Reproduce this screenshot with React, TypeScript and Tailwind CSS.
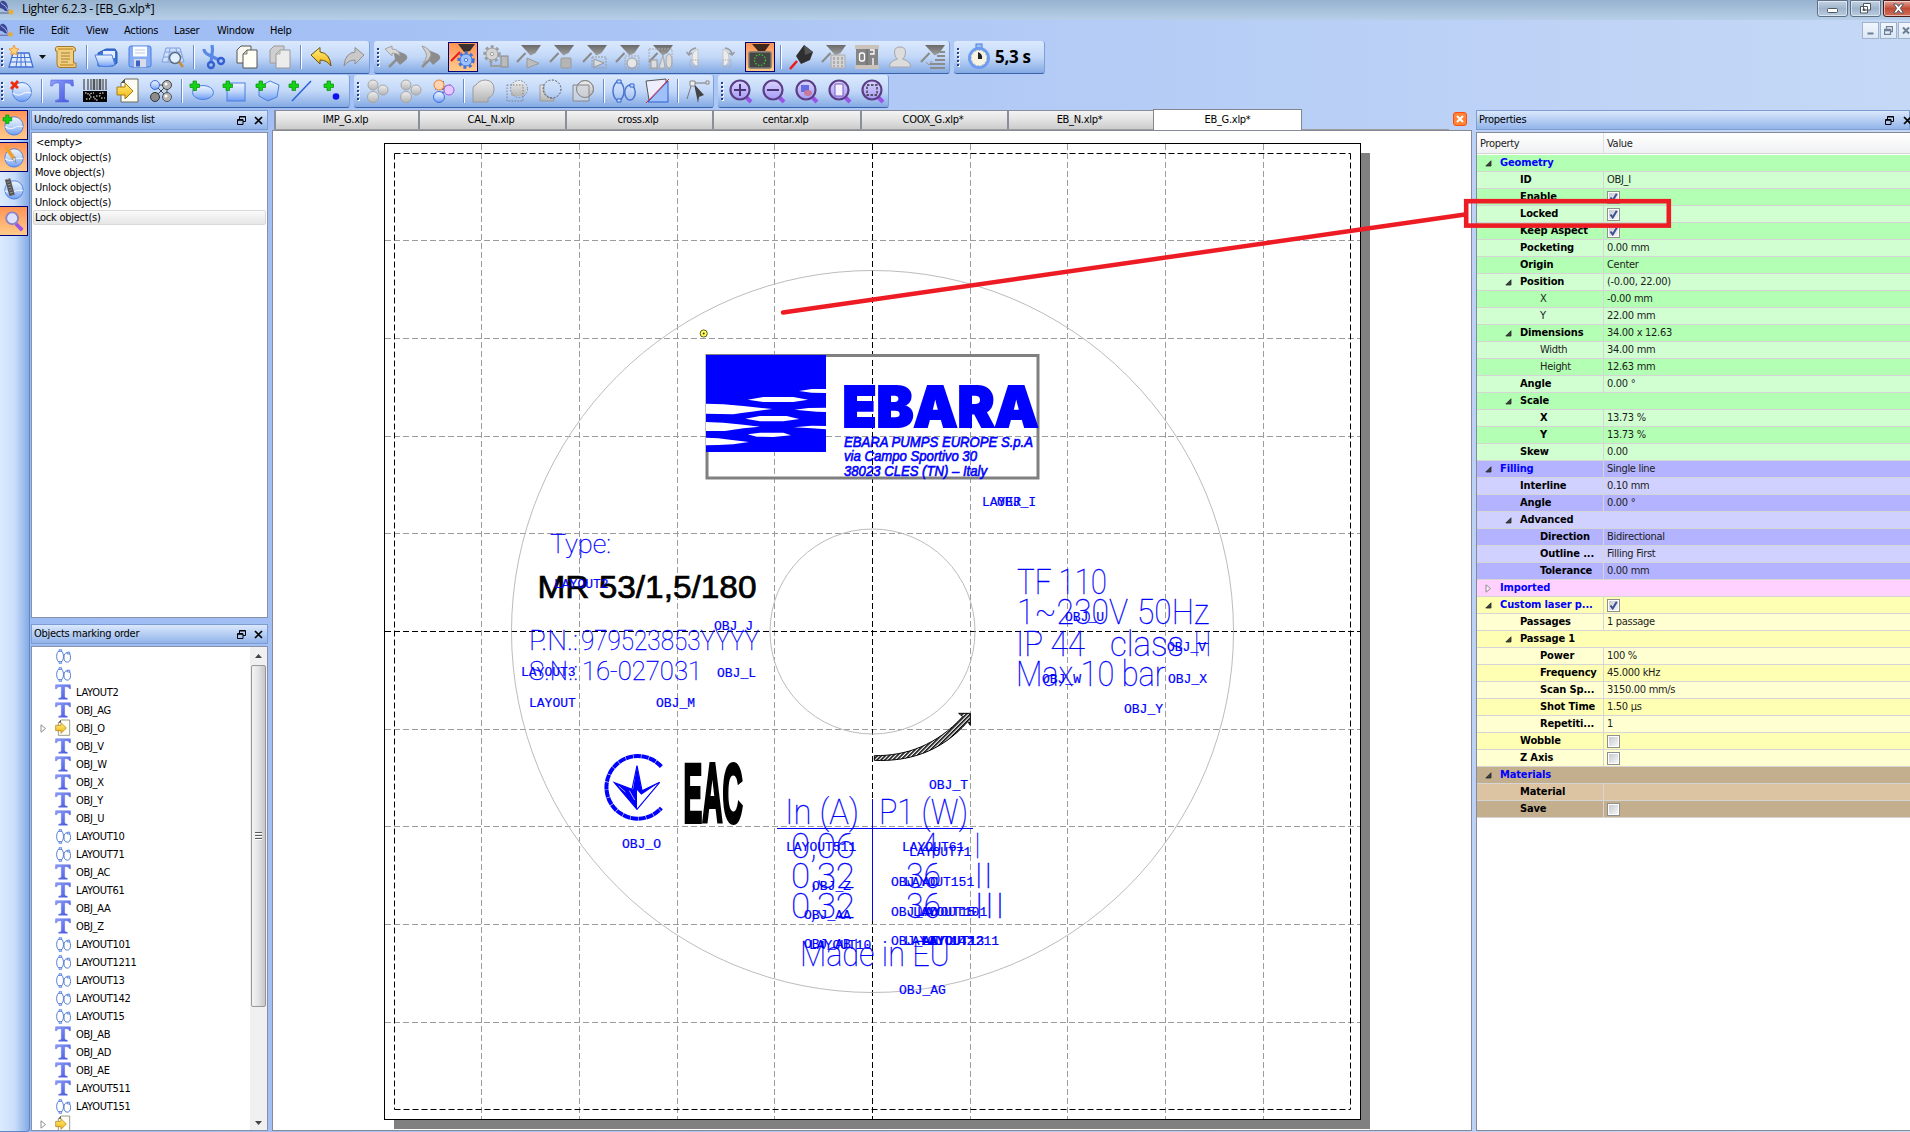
import React from "react";

const UI = "font-['DejaVu_Sans_Condensed','DejaVu_Sans',sans-serif]";

type IconProps = { children: React.ReactNode; size?: number };
const Svg = ({ children, size = 24 }: IconProps) => (
  <svg width={size} height={size} viewBox="0 0 24 24" fill="none" className="shrink-0 overflow-visible">
    {children}
  </svg>
);

const Defs = () => (
  <svg width="0" height="0" className="absolute">
    <defs>
      <linearGradient id="blueBall" x1="0" y1="0" x2="0" y2="1">
        <stop offset="0" stopColor="#eef5ff" />
        <stop offset=".5" stopColor="#bcd4fb" />
        <stop offset="1" stopColor="#6f9cf2" />
      </linearGradient>
      <linearGradient id="grayBall" x1="0" y1="0" x2="0" y2="1">
        <stop offset="0" stopColor="#f0f0f0" />
        <stop offset="1" stopColor="#b4b4b4" />
      </linearGradient>
      <linearGradient id="yel" x1="0" y1="0" x2="0" y2="1">
        <stop offset="0" stopColor="#fff07a" />
        <stop offset="1" stopColor="#f2b211" />
      </linearGradient>
      <linearGradient id="tee" x1="0" y1="0" x2="1" y2="1">
        <stop offset="0" stopColor="#8fa0ff" />
        <stop offset="1" stopColor="#3f50d8" />
      </linearGradient>
      <linearGradient id="lens" x1="0" y1="0" x2="0" y2="1">
        <stop offset="0" stopColor="#d9d4ff" />
        <stop offset="1" stopColor="#a79af5" />
      </linearGradient>
      <linearGradient id="headG" x1="0" y1="0" x2="0" y2="1">
        <stop offset="0" stopColor="#6a6a6a" />
        <stop offset="1" stopColor="#a0a0a0" />
      </linearGradient>
    </defs>
  </svg>
);

const Plus = ({ x = 1, y = 1 }) => (
  <path d={`M${x + 3} ${y}h3.500v3h3v3.500h-3v3h-3.500v-3h-3v-3.500h3z`} fill="#12d412" stroke="#0a8a0a" strokeWidth=".7" />
);
const Ball = ({ cx = 13, cy = 13, r = 9.5 }) => (
  <g>
    <circle cx={cx} cy={cy} r={r} fill="url(#blueBall)" stroke="#4a7fe0" />
    <path d={`M${cx - r} ${cy + 1}q${r * 0.6} 3.5 ${r} 1t${r} -1`} stroke="#fff" strokeWidth="1.2" opacity=".8" />
  </g>
);
const Head = () => (
  <>
    <path d="M4 0H24L18.5 8 13.5 10.5z" fill="url(#headG)" />
    <path d="M0 17L8.5 8" stroke="#8a8a8a" strokeWidth="2" />
  </>
);
const Feather = ({ size = 16 }) => (
  <svg width={size} height={size} viewBox="0 0 16 16" className="shrink-0">
    <path d="M0 3Q1 0 4 1q4 2 4 8l1 2Q5 12 3 9L0 8z" fill="#3b4596" />
    <path d="M1 3q5 2 8 9" stroke="#aeb6ea" fill="none" />
    <path d="M0 13h9" stroke="#57618f" />
    <path d="M11 9v6M8 12h6M9 10l4 4M13 10l-4 4" stroke="#f3a712" />
  </svg>
);

const Gear = ({ cx = 14, cy = 15, r = 6, fill = "#9cc0ff", stroke = "#3f73dd" }) => (
  <g>
    <circle cx={cx} cy={cy} r={r + 1.2} stroke={stroke} strokeWidth="3" strokeDasharray="3 2.4" />
    <circle cx={cx} cy={cy} r={r} fill={fill} stroke={stroke} />
    <circle cx={cx} cy={cy} r={1.6} fill="#fff" stroke={stroke} />
  </g>
);

const GridIcon = () => (
  <Svg>
    <path d="M4 8H20L24 22H0z" fill="#dfeaff" stroke="#3f6fd6" strokeWidth="1.3" />
    <path d="M9 8L7 22M15 8l2 14M3 12.500h18M1.500 17h21M12 8v14" stroke="#3f6fd6" />
    <path d="M5 0l1.500 3.500L10 4 7.500 6.500 8 10 5 8.500 2 10l.5-3.500L0 4l3.500-.5z" fill="#ffd27a" stroke="#f08a1d" strokeWidth=".8" />
  </Svg>
);
const Scroll = () => (
  <Svg>
    <path d="M3 1.500H19Q22 2 21.500 6H19.500V18H22V22.500H6Q3 22.500 3 19V6H1.500Q.5 2 3 1.500z" fill="#efcf80" stroke="#a5762a" />
    <path d="M4 3h15v2H4zM6 19h14v2H6z" fill="#d6a549" />
    <path d="M7 8h9M7 11h9M7 14h9M7 17h7" stroke="#a5762a" strokeWidth=".9" />
  </Svg>
);
const Folder = () => (
  <Svg>
    <path d="M3 8l8-4h9l2 3v11l-4 3H3z" fill="#3c72d8" stroke="#2b58b8" />
    <path d="M8 6h12v7H8z" fill="#e8f0ff" />
    <path d="M0 10h17l3 10q-8 3-16 1z" fill="url(#blueBall)" stroke="#4a7fe0" />
  </Svg>
);
const Floppy = () => (
  <Svg>
    <rect x="1" y="1" width="22" height="21" rx="2" fill="#86acf5" stroke="#4a7ce0" />
    <rect x="5" y="1.500" width="14" height="10" fill="#fafcff" />
    <path d="M7 5h10M7 8h10" stroke="#bfcbe6" />
    <rect x="6" y="14" width="12" height="8" fill="#d6dbe6" />
    <rect x="8" y="15.500" width="4" height="6" fill="#3a62c4" />
  </Svg>
);
const Preview = () => (
  <Svg>
    <path d="M5 3H19L23 17H1z" fill="#cfe0ff" stroke="#7fa0dc" />
    <path d="M9 3L7 17M15 3l2 14M4 7h16M3 12h18" stroke="#7fa0dc" />
    <circle cx="14" cy="13" r="5.500" fill="#e3f0ff" stroke="#5d6b88" strokeWidth="1.500" />
    <path d="M18 17l4 5" stroke="#c98b2c" strokeWidth="2.500" />
  </Svg>
);
const Scissors = () => (
  <Svg>
    <path d="M2 4q0 4 5 6l10 5M10 0q1 5 0 9l-1 8" stroke="#5a88e6" strokeWidth="3.200" />
    <circle cx="9" cy="20" r="3" stroke="#3560d0" strokeWidth="2.400" />
    <circle cx="19" cy="16" r="3" stroke="#3560d0" strokeWidth="2.400" />
  </Svg>
);
const Copy = ({ gray = false }) => (
  <Svg>
    <path d="M6 1h10v17H2V5z" fill={gray ? "#cfcfcf" : "#f7f7f0"} stroke={gray ? "#9a9a9a" : "#555"} />
    <path d="M12 5h10v18H8V9z" fill={gray ? "#ececec" : "#fffff6"} stroke={gray ? "#9a9a9a" : "#555"} />
    <path d="M12 5v4H8z" fill="#d7d7c8" stroke={gray ? "#9a9a9a" : "#555"} strokeWidth=".7" />
  </Svg>
);
const Undo = ({ gray = false }) => (
  <Svg>
    <g transform={gray ? "translate(24 0) scale(-1 1)" : undefined}>
      <path d="M2 10L11 2.500v4.500q10 1 11 14-4-6-11-6v4z" fill={gray ? "#c9c9c9" : "url(#yel)"} stroke={gray ? "#8e8e8e" : "#6b5410"} />
    </g>
  </Svg>
);
const Pointer = ({ v = 0 }) => (
  <Svg>
    <path d="M8 4L20 9q4 3 1 6l-6 5-5-6z" fill="#8c8c8c" />
    <path d="M12 14L4 22" stroke="#8f8f8f" strokeWidth="2.500" />
    {v === 0 ? (
      <path d="M0 4l7-3v3q7 0 8 7-3-3-8-3v3z" fill="#d9d9d9" stroke="#a3a3a3" />
    ) : (
      <path d="M4 1q8 2 9 9-2 6-8 8 5-6 3-10z" fill="#cfcfcf" stroke="#a0a0a0" />
    )}
  </Svg>
);
const MarkGear = () => (
  <Svg>
    <path d="M7 -1H24L19 6l-6 1z" fill="#3a3030" />
    <path d="M0 16L9 7" stroke="#f01818" strokeWidth="2" />
    <Gear cx={15} cy={15} r={6} />
  </Svg>
);
const GrayGear = () => (
  <Svg>
    <Gear cx={8} cy={9} r={6} fill="#d4d4d4" stroke="#9d9d9d" />
    <rect x="17" y="11" width="7" height="11" fill="#bbb" stroke="#888" />
    <path d="M7 16v5h9" stroke="#9d9d9d" strokeWidth="2" />
  </Svg>
);
const L = ({ children }: { children: React.ReactNode }) => (
  <Svg>
    <Head />
    {children}
  </Svg>
);
const Rotate = ({ flip = false }) => (
  <Svg>
    <g transform={flip ? "translate(24 0) scale(-1 1)" : undefined}>
      <path d="M16 4v17q-6-1-6-8t6-9z" fill="#ececec" stroke="#c4c4c4" />
      <path d="M14 3Q8 4 7 9M4.500 7L7 10l3-2" stroke="#9a9a9a" strokeWidth="1.500" />
      <path d="M8 15h8v7H8z" stroke="#aaa" strokeDasharray="1.500 1" />
    </g>
  </Svg>
);
const Screen = () => (
  <Svg>
    <path d="M4 -1H22L17 6H10z" fill="#40291c" />
    <rect x="1" y="7" width="22" height="16" rx="1.500" fill="#444" stroke="#777" strokeWidth="1.500" />
    <circle cx="12" cy="15" r="5.500" stroke="#39c339" strokeWidth="1.300" strokeDasharray="1.500 1.500" />
  </Svg>
);
const LaserPen = () => (
  <Svg>
    <path d="M15 0l9 7-3 8-9 4-5-8z" fill="#2f2f2f" />
    <path d="M15 0l9 7-8 3z" fill="#555" />
    <path d="M8 16L1 24" stroke="#f01818" strokeWidth="2.500" />
  </Svg>
);
const Counter = () => (
  <Svg>
    <rect x="0" y="0" width="24" height="4" fill="#c9c3bb" />
    <rect x="0" y="20" width="24" height="4" fill="#c9c3bb" />
    <rect x="1" y="4" width="22" height="16" fill="#858585" />
    <rect x="4.500" y="8" width="5" height="8" rx="2" stroke="#fff" strokeWidth="1.300" />
    <path d="M12 4v16" stroke="#666" />
    <path d="M15 5h4v4h-4M18 13v7" stroke="#fff" strokeWidth="1.300" />
  </Svg>
);
const Person = () => (
  <Svg>
    <path d="M12 2q6 0 5.500 6-.5 5-3 6 8 2 8 8h-21q0-6 8-8-2.500-1-3-6Q6 2 12 2z" fill="#dcdcdc" stroke="#a6a6a6" />
  </Svg>
);
const Clock = () => (
  <Svg>
    <rect x="9" y="-1" width="6" height="4" fill="#9fc0f7" stroke="#4b7ddd" />
    <circle cx="12" cy="13" r="9.500" fill="#f7f3e3" stroke="#6d9cf0" strokeWidth="3" />
    <circle cx="12" cy="13" r="7.500" stroke="#9a9a88" strokeWidth=".8" strokeDasharray="1 2.900" />
    <path d="M11 7v7h4q1-5-4-7z" fill="#222" />
  </Svg>
);
const DeleteBall = () => (
  <Svg>
    <Ball />
    <path d="M2 3l7 6M9 2L2 10" stroke="#f02a0a" strokeWidth="2.800" />
  </Svg>
);
const Tee = ({ size = 24 }) => (
  <Svg size={size}>
    <path d="M1 1h22l.5 6h-2q-.5-3-4-3H14.500v15q0 2 4 2.500V23h-13v-1.500q4-.5 4-2.500V4H6.500q-3.500 0-4 3h-2z" fill="url(#tee)" stroke="#5566dd" strokeWidth=".6" />
  </Svg>
);
const Barcode = () => (
  <Svg>
    <path d="M1 0v11M5 0v11M8 0v11M14 0v11M20 0v11M23 0v11" stroke="#555" strokeWidth="1.300" />
    <path d="M11 0v11M17 0v11" stroke="#555" strokeWidth="2.500" />
    <rect x="0" y="12" width="24" height="11" fill="#050505" />
    <path d="M2 14h3v2h3v-2h3M13 17h4v-3h4M3 20h4v-2h5v3h3M18 19h4" stroke="#fff" strokeWidth="1" strokeDasharray="1.500 1.500" />
  </Svg>
);
const Import = ({ size = 24 }) => (
  <Svg size={size}>
    <path d="M9 0h13v23H5V4z" fill="#fdfdf4" stroke="#6a6a5c" />
    <path d="M9 0v4H5z" fill="#555" />
    <path d="M1 8h8V4l8 8-8 8v-4H1z" fill="url(#yel)" stroke="#a97a12" />
  </Svg>
);
const Nodes = () => (
  <Svg>
    <path d="M6 6L18 18M18 6L6 18M6 6h12v12" stroke="#444" />
    <circle cx="6" cy="6" r="4.500" fill="url(#blueBall)" stroke="#3f6fd6" />
    <circle cx="18" cy="6" r="4.500" fill="#b5b5b5" stroke="#444" />
    <circle cx="6" cy="18" r="4.500" fill="#8c8c8c" stroke="#333" />
    <circle cx="18" cy="18" r="4.500" fill="#b5b5b5" stroke="#555" />
    <circle cx="17" cy="5" r="1.500" fill="#fff" />
    <circle cx="17" cy="17" r="1.500" fill="#fff" />
  </Svg>
);
const Spheres = ({ multi = false }) => (
  <Svg>
    {multi && <path d="M12 6l8 8M4 10l16-4M12 2v18" stroke="#222" strokeDasharray="2 1.500" />}
    <circle cx="8" cy="6" r="5" fill={multi ? "#ffd4b0" : "url(#grayBall)"} stroke={multi ? "#e8843c" : "#a5a5a5"} />
    <circle cx="18" cy="11" r="5" fill={multi ? "#e6c8ff" : "url(#grayBall)"} stroke={multi ? "#9a5ae0" : "#a5a5a5"} />
    <circle cx="8" cy="18" r="5.500" fill={multi ? "url(#blueBall)" : "url(#grayBall)"} stroke={multi ? "#3f6fe6" : "#a5a5a5"} />
  </Svg>
);
const Bool = ({ v }: { v: number }) => (
  <Svg>
    {v === 0 && <path d="M1 9q0-2 3-3 3-5 10-5 8 1 8 9 0 7-6 9v4H1z" fill="url(#grayBall)" stroke="#9a9a9a" />}
    {v === 1 && (
      <>
        <path d="M6 7q2-5 8-5 7 1 7 8 0 6-4 7H6z" fill="url(#grayBall)" />
        <path d="M2 6h16v16H2z" stroke="#808080" strokeDasharray="1.500 1.500" />
        <circle cx="14" cy="10" r="8.500" stroke="#808080" strokeDasharray="1.500 1.500" />
      </>
    )}
    {v === 2 && (
      <>
        <path d="M2 6h4q-2 12 10 14v2H2z" fill="url(#grayBall)" stroke="#9a9a9a" />
        <circle cx="14" cy="10" r="9" stroke="#555" strokeDasharray="2 1.500" />
      </>
    )}
    {v === 3 && (
      <>
        <circle cx="14" cy="10" r="8.500" fill="url(#grayBall)" stroke="#999" />
        <path d="M2 6h16v16H2z" fill="#d3d7de" fillOpacity=".7" stroke="#888" />
        <circle cx="14" cy="10" r="8.500" stroke="#888" />
      </>
    )}
  </Svg>
);
const Rings = ({ size = 24 }) => (
  <Svg size={size}>
    <ellipse cx="6.500" cy="12" rx="5.500" ry="9.500" stroke="#4b74cf" strokeWidth="1.500" />
    <ellipse cx="18" cy="13.500" rx="5.200" ry="7.500" stroke="#4b74cf" strokeWidth="1.500" />
    <path d="M5 1h4v3H5zM5 20h4v3H5zM18 5h4v3h-4z" fill="#cfe0ff" stroke="#2f62d0" />
  </Svg>
);
const Diag = () => (
  <Svg>
    <path d="M1 2l20-2v21H4z" fill="#eef" stroke="#555" />
    <path d="M23 2v21H3z" fill="#9fc0f8" stroke="#2c5fd8" />
    <path d="M24 0L1 24" stroke="#e02222" />
  </Svg>
);
const NodeEdit = () => (
  <Svg>
    <path d="M6 4h15M6 4L1 20" stroke="#777" />
    <path d="M8 5l10 11-5 2-1 6z" fill="#444" />
    <path d="M4 2h5v5H4zM20 2h3v3h-3z" fill="#eee" stroke="#888" />
  </Svg>
);
const Zoom = ({ children, size = 24 }: { children?: React.ReactNode; size?: number }) => (
  <Svg size={size}>
    <path d="M16 17l6 6" stroke="#9a55e8" strokeWidth="4" />
    <circle cx="11" cy="11" r="9.500" fill="url(#lens)" stroke="#5b3f86" strokeWidth="2.200" />
    {children}
  </Svg>
);

const Sep = () => <div className="ml-[3px] mr-[3px] h-6 w-[2px] shrink-0 border-l border-r border-l-[#6a8ccb] border-r-white" />;
const Slot = ({ children, on }: { children: React.ReactNode; on?: boolean }) => (
  <div className="-ml-px mr-px flex h-[30px] w-[33px] shrink-0 items-center justify-center">
    {on ? (
      <div className="flex h-[30px] w-[30px] items-center justify-center border border-[#00007c] bg-gradient-to-b from-[#fe9355] to-[#ffcb8a]">
        {children}
      </div>
    ) : (
      children
    )}
  </div>
);
const Grip = () => (
  <div className="flex w-[7px] shrink-0 flex-col items-center gap-[2px] pl-[1px]">
    {[0, 1, 2, 3, 4].map((i) => (
      <div key={i} className="h-[2px] w-[2px] bg-[#27418a] shadow-[1px_1px_0_#fff]" />
    ))}
  </div>
);
const Bar = ({ children, w, first }: { children: React.ReactNode; w: string; first?: boolean }) => (
  <div
    className={`flex h-[33px] shrink-0 items-center rounded-[3px] border-b border-r border-b-[#3b61a8] border-r-[#7d9fd8] bg-gradient-to-b from-[#dbe9fd] via-[#c3d8f8] to-[#84aae4] ${w} ${first ? "rounded-l-none" : ""}`}
  >
    {children}
  </div>
);

const DockTitle = ({ title, cut }: { title: string; cut?: boolean }) => (
  <div className="flex h-5 shrink-0 items-center border border-[#7d9cd0] bg-gradient-to-b from-[#dbe8fc] to-[#92b4ea] pl-[2px] pt-px">
    <span className="flex-1 whitespace-nowrap tracking-[-0.27px]">{title}</span>
    <svg width="9" height="9" viewBox="0 0 9 9" fill="none" stroke="#000" className={cut ? "mr-[9px]" : "mr-2"}>
      <path d="M2.500 3V.5h6v5H6M2.500 1h6M.5 3.500h5.500v5H.5zM.5 4.300h5.500" />
    </svg>
    <svg width="9" height="9" viewBox="0 0 9 9" stroke="#000" strokeWidth="1.700" className={cut ? "-mr-[3px]" : "mr-1"}>
      <path d="M1 1l7 7M8 1L1 8" />
    </svg>
  </div>
);

const objects: [string, string][] = [
  ["r", ""], ["r", ""], ["t", "LAYOUT2"], ["t", "OBJ_AG"], ["i", "OBJ_O"], ["t", "OBJ_V"], ["t", "OBJ_W"], ["t", "OBJ_X"],
  ["t", "OBJ_Y"], ["t", "OBJ_U"], ["r", "LAYOUT10"], ["r", "LAYOUT71"], ["t", "OBJ_AC"], ["t", "LAYOUT61"], ["t", "OBJ_AA"],
  ["t", "OBJ_Z"], ["r", "LAYOUT101"], ["r", "LAYOUT1211"], ["r", "LAYOUT13"], ["r", "LAYOUT142"], ["r", "LAYOUT15"],
  ["t", "OBJ_AB"], ["t", "OBJ_AD"], ["t", "OBJ_AE"], ["t", "LAYOUT511"], ["r", "LAYOUT151"], ["i", ""],
];

const G1 = "bg-[#b3ffb3]", G2 = "bg-[#d1ffd1]", B1 = "bg-[#b3b3ff]", B2 = "bg-[#d1d1ff]";
const P = "bg-[#ffd1ff]", Y1 = "bg-[#ffffb3]", Y2 = "bg-[#ffffd1]", M1 = "bg-[#c3ae8d]", M2 = "bg-[#dcc4a2]";
type Row = { c: string; n: string; v?: string; l: number; a?: "open" | "closed"; k?: "on" | "off"; h?: boolean; t?: boolean; s?: boolean };
const rows: Row[] = [
  { c: G1, n: "Geometry", l: 0, a: "open", h: true, s: true },
  { c: G2, n: "ID", v: "OBJ_I", l: 1 },
  { c: G1, n: "Enable", l: 1, k: "on" },
  { c: G2, n: "Locked", l: 1, k: "on" },
  { c: G1, n: "Keep Aspect", l: 1, k: "on" },
  { c: G2, n: "Pocketing", v: "0.00 mm", l: 1 },
  { c: G1, n: "Origin", v: "Center", l: 1 },
  { c: G2, n: "Position", v: "(-0.00, 22.00)", l: 1, a: "open" },
  { c: G1, n: "X", v: "-0.00 mm", l: 2, t: true },
  { c: G2, n: "Y", v: "22.00 mm", l: 2, t: true },
  { c: G1, n: "Dimensions", v: "34.00 x 12.63", l: 1, a: "open" },
  { c: G2, n: "Width", v: "34.00 mm", l: 2, t: true },
  { c: G1, n: "Height", v: "12.63 mm", l: 2, t: true },
  { c: G2, n: "Angle", v: "0.00 °", l: 1 },
  { c: G1, n: "Scale", l: 1, a: "open", s: true },
  { c: G2, n: "X", v: "13.73 %", l: 2 },
  { c: G1, n: "Y", v: "13.73 %", l: 2 },
  { c: G2, n: "Skew", v: "0.00", l: 1 },
  { c: B1, n: "Filling", v: "Single line", l: 0, a: "open", h: true },
  { c: B2, n: "Interline", v: "0.10 mm", l: 1 },
  { c: B1, n: "Angle", v: "0.00 °", l: 1 },
  { c: B2, n: "Advanced", l: 1, a: "open", s: true },
  { c: B1, n: "Direction", v: "Bidirectional", l: 2 },
  { c: B2, n: "Outline ...", v: "Filling First", l: 2 },
  { c: B1, n: "Tolerance", v: "0.00 mm", l: 2 },
  { c: P, n: "Imported", l: 0, a: "closed", h: true, s: true },
  { c: Y1, n: "Custom laser p...", l: 0, a: "open", h: true, k: "on" },
  { c: Y2, n: "Passages", v: "1 passage", l: 1 },
  { c: Y1, n: "Passage 1", l: 1, a: "open", s: true },
  { c: Y2, n: "Power", v: "100 %", l: 2 },
  { c: Y1, n: "Frequency", v: "45.000 kHz", l: 2 },
  { c: Y2, n: "Scan Sp...", v: "3150.00 mm/s", l: 2 },
  { c: Y1, n: "Shot Time", v: "1.50 µs", l: 2 },
  { c: Y2, n: "Repetiti...", v: "1", l: 2 },
  { c: Y1, n: "Wobble", l: 1, k: "off" },
  { c: Y2, n: "Z Axis", l: 1, k: "off" },
  { c: M1, n: "Materials", l: 0, a: "open", h: true, s: true },
  { c: M2, n: "Material", v: "", l: 1 },
  { c: M1, n: "Save", l: 1, k: "off" },
];

const Check = ({ on }: { on: boolean }) => (
  <div className="h-[13px] w-[13px] border border-[#8e8f8f] bg-white p-[1px]">
    <div className="h-[9px] w-[9px] bg-gradient-to-br from-[#c6cad0] to-[#f6f6f6]">
      {on && (
        <svg width="9" height="9" viewBox="0 0 9 9" fill="none" stroke="#3c4f93" strokeWidth="2">
          <path d="M1.500 4.500L3.700 7.500 7.800 .8" />
        </svg>
      )}
    </div>
  </div>
);
const Tri = ({ open }: { open: boolean }) =>
  open ? (
    <svg width="7" height="7" viewBox="0 0 7 7" className="shrink-0">
      <path d="M6 .8V6H.8z" fill="#404040" stroke="#262626" strokeWidth=".8" />
    </svg>
  ) : (
    <svg width="7" height="9" viewBox="0 0 7 9" className="shrink-0">
      <path d="M1 .8v7.400L5.500 4.500z" fill="#fff" fillOpacity=".6" stroke="#8e8e8e" />
    </svg>
  );

const levelPad = ["w-[23px]", "w-[43px]", "w-[63px]"];
const PropRow = ({ r }: { r: Row }) => (
  <div className={`flex h-[17px] border-b border-[#d5d5d5] ${r.c}`}>
    <div className={`flex w-[127px] shrink-0 items-center overflow-hidden ${r.s ? "" : "border-r border-[#d5d5d5]"}`}>
      <div className={`flex shrink-0 justify-end pr-2 ${levelPad[r.l]}`}>{r.a && <Tri open={r.a === "open"} />}</div>
      <span
        className={`whitespace-nowrap leading-4 ${r.t ? "tracking-[-0.3px] text-[#222]" : "font-bold tracking-[-0.13px]"} ${r.h ? "text-[#0000ff]" : ""}`}
      >
        {r.n}
      </span>
    </div>
    <div className="flex items-center whitespace-nowrap pl-[3px] leading-4 tracking-[-0.3px] text-[#1c1c1c]">
      {r.k ? <Check on={r.k === "on"} /> : r.v}
    </div>
  </div>
);

const MONO = "'Liberation Mono', monospace";
const labels: [string, number, number][] = [
  ["LAYER", 982, 506], ["OBJ_I", 997, 506], ["LAYOUT2", 554, 588], ["OBJ_J", 714, 630], ["LAYOUT3", 521, 676],
  ["OBJ_L", 717, 677], ["LAYOUT", 529, 707], ["OBJ_M", 656, 707], ["OBJ_O", 622, 848], ["OBJ_U", 1065, 621],
  ["OBJ_V", 1167, 651], ["OBJ_W", 1042, 683], ["OBJ_X", 1168, 683], ["OBJ_Y", 1124, 713], ["OBJ_T", 929, 789],
  ["LAYOUT511", 786, 851], ["LAYOUT61", 902, 851], ["LAYOUT71", 909, 856], ["OBJ_Z", 812, 890], ["OBJ_AC", 891, 886],
  ["LAYOUT151", 904, 886], ["OBJ_AA", 804, 919], ["OBJ_AD", 891, 916], ["LAYOUT15", 913, 916], ["LAYOUT101", 917, 916],
  ["OBJ_AB", 804, 948], ["LAYOUT10", 809, 949], ["OBJ_AE", 891, 945], ["LAYOUT142", 904, 945], ["LAYOUT13", 922, 945],
  ["LAYOUT1211", 921, 945], ["OBJ_AG", 899, 994],
];
const strokes: [string, number, number, number, number][] = [
  ["Type:", 550, 553, 61, 26], ["P.N.:", 529, 650, 49, 28], ["979523853YYYY", 581, 650, 178, 28], ["S.N.:", 529, 680, 49, 26], ["16-027031", 582, 680, 120, 26],
  ["TF 110", 1017, 594, 90, 35], ["1~230V", 1017, 624, 111, 35], ["50Hz", 1137, 624, 72, 35], ["IP 44", 1016, 656, 69, 35],
  ["class", 1110, 656, 74, 35], ["H", 1194, 656, 17, 35], ["Max 10 bar", 1016, 686, 149, 35],
  ["In (A)", 785, 824, 74, 35], ["P1 (W)", 879, 824, 89, 35], ["0,06", 791, 858, 64, 35], ["0,32", 791, 888, 64, 35],
  ["0,32", 791, 918, 64, 35], ["4", 921, 858, 17, 35], ["36", 906, 888, 35, 35], ["36", 906, 918, 35, 35],
  ["I", 974, 858, 7, 35], ["II", 974, 888, 19, 35], ["III", 974, 918, 31, 35], ["Made in EU", 800, 966, 150, 35],
];

const Canvas = () => (
  <svg width="1198" height="1000" viewBox="273 131 1198 1000" fill="none" className="block">
    <defs>
      <pattern id="hatch" width="2.800" height="2.800" patternUnits="userSpaceOnUse" patternTransform="scale(3) rotate(45)">
        <rect width="2.800" height="2.800" fill="#fff" />
        <path d="M.8 0v2.800" stroke="#000" strokeWidth="1.500" />
      </pattern>
    </defs>
    <rect x="394" y="153" width="976" height="976" fill="#808080" />
    <rect x="384.500" y="143.500" width="976" height="976" fill="#fff" stroke="#000" />
    <g stroke="#9c9c9c" strokeDasharray="6 3">
      {[481.5, 579.5, 677.5, 774.5, 970.5, 1067.5, 1165.5, 1263.5].map((x) => (
        <path key={x} d={`M${x} 144V1119`} />
      ))}
      {[240.5, 338.5, 436.5, 533.5, 729.5, 826.5, 924.5, 1022.5].map((y) => (
        <path key={y} d={`M385 ${y}H1360`} />
      ))}
    </g>
    <g stroke="#000" strokeDasharray="6 3">
      <path d="M394.500 153.500H1350.500M394.500 153.500V1109.500M394.500 1109.500H1350.500M1350.500 153.500V1109.500" />
      <path d="M872.500 144V1119M385 631.500H1360" />
    </g>
    <circle cx="872.500" cy="631.500" r="361" stroke="#bcbcbc" />
    <circle cx="872.500" cy="631.500" r="102.500" stroke="#bcbcbc" />

    <circle cx="703.700" cy="333.500" r="3.600" fill="#ffff55" stroke="#5c5c20" />
    <circle cx="703.700" cy="333.500" r="1" fill="#333" />

    <rect x="707" y="355.500" width="331" height="122.500" stroke="#808080" strokeWidth="3" />
    <g transform="translate(680 320) scale(.33333)">
      <path d="M78 105H438V396H78z" fill="#0000ff" />
      <g fill="#fff">
        <path d="M357 213L395 207H438V219L395 218z" />
        <path d="M203 239L250 231H340L384 239 340 246H250z" />
        <path d="M78 251L130 253 190 258 277 267 215 275 190 278 160 283 78 281z" />
        <path d="M344 269L385 264 438 263V276L410 275z" />
        <path d="M196 296L240 288H320L358 297 310 304H240z" />
        <path d="M78 306L130 308 190 314 240 320 190 325 135 333H78z" />
        <path d="M342 322L395 317 438 318V328L395 325z" />
        <path d="M203 343L240 338H310L333 346 280 351 230 350z" />
        <path d="M78 353L115 355 150 359 207 366 160 373 115 375 78 376z" />
      </g>
    </g>
    <g fontFamily="Inter, 'Liberation Sans', sans-serif" fontWeight="900" fontSize="56" fill="#0000ff" stroke="#0000ff" strokeWidth="2">
      <text x="842.500" y="426.500" textLength="196" lengthAdjust="spacingAndGlyphs">
        EBARA
      </text>
    </g>
    <g fontFamily="'Liberation Sans', Arial, sans-serif" fontStyle="italic" fontSize="14" fill="#0000ff" stroke="#0000ff" strokeWidth=".6">
      <text x="844" y="446.500" textLength="189" lengthAdjust="spacingAndGlyphs">EBARA PUMPS EUROPE S.p.A</text>
      <text x="844" y="461" textLength="133" lengthAdjust="spacingAndGlyphs">via Campo Sportivo 30</text>
      <text x="844" y="475.500" textLength="143" lengthAdjust="spacingAndGlyphs">38023 CLES (TN) – Italy</text>
    </g>

    <text x="537.500" y="598" fontFamily="'Liberation Sans', Arial, sans-serif" fontSize="31" textLength="219" lengthAdjust="spacingAndGlyphs" fill="#000" stroke="#000" strokeWidth=".7">
      MR 53/1,5/180
    </text>

    <g fontFamily="Roboto, Lato, sans-serif" fontWeight="100" fill="#0000ff" stroke="#0000ff" strokeWidth=".3">
      {strokes.map(([s, x, y, w, f], i) => (
        <text key={i} x={x} y={y} fontSize={f} textLength={w} lengthAdjust="spacingAndGlyphs">
          {s}
        </text>
      ))}
    </g>
    <path d="M777 828.500H973M872.500 799V921" stroke="#0000ff" />

    <g transform="translate(500 500) scale(.33333)">
      <path d="M484 800A94 94 0 1 0 484 924" stroke="#0000ff" strokeWidth="12" strokeDasharray="22 1.500" />
      <path d="M411 797L426 872 479 847 411 928 343 848 396 868z" stroke="#0000ff" strokeWidth="3.500" />
      <path d="M411 797L399 868 411 928zM343 848L411 928V868L396 868z" fill="#0000ff" />
      <path d="M411 797L421 850 426 872 479 847 424 884 411 870z" fill="#0000ff" />
      <path d="M356 858l20 18M388 872l16 28" stroke="#fff" strokeWidth="2" />
    </g>
    <g transform="translate(683.500 821.500) scale(.36 1)" fontFamily="'Liberation Sans', Arial, sans-serif" fontWeight="700" fontSize="83" fill="#000" stroke="#000" strokeWidth="4">
      <text textLength="165" lengthAdjust="spacingAndGlyphs">EAC</text>
    </g>

    <g transform="translate(740 690) scale(.33333)">
      <path d="M403 197C500 198 590 165 668 80L656 70H691V106L683 95C600 190 500 215 403 211z" fill="url(#hatch)" stroke="#000" strokeWidth="3" />
    </g>

    <g fontFamily={MONO} fontSize="13" fill="#0000ff" stroke="#0000ff" strokeWidth=".2">
      {labels.map(([s, x, y], i) => (
        <text key={i} x={x} y={y}>
          {s}
        </text>
      ))}
    </g>
  </svg>
);

const tabs: [string, string][] = [
  ["IMP_G.xlp", "w-[144px]"], ["CAL_N.xlp", "w-[147px]"], ["cross.xlp", "w-[147px]"], ["centar.xlp", "w-[148px]"],
  ["COOX_G.xlp*", "w-[147px]"], ["EB_N.xlp*", "w-[146px]"],
];
const menus: [string, string][] = [
  ["File", "w-8"], ["Edit", "w-[35px]"], ["View", "w-[38px]"], ["Actions", "w-[50px]"], ["Laser", "w-[43px]"], ["Window", "w-[53px]"], ["Help", "w-10"],
];

export default function App() {
  return (
    <div className={`relative flex h-[1132px] w-[1910px] flex-col overflow-hidden bg-gradient-to-r from-[#9dbbf4] to-[#c5d8f6] text-[11px] text-black ${UI}`}>
      <Defs />
      <header className="flex h-5 shrink-0 items-start bg-gradient-to-b from-[#97b2cf] to-[#b7cfe8]">
        <Feather />
        <h1 className="ml-[6px] flex-1 whitespace-nowrap font-['Open_Sans','Noto_Sans',sans-serif] text-[12px] leading-[18px] tracking-[-0.35px]">
          Lighter 6.2.3 - [EB_G.xlp*]
        </h1>
        <div className="-mr-1 flex gap-[2px]">
          {[0, 1, 2].map((i) => (
            <div
              key={i}
              className={`flex h-[17px] w-[31px] items-center justify-center rounded-b-[3px] border shadow-[inset_0_0_0_1px_rgba(255,255,255,.5)] ${i === 2 ? "border-[#4d1a1a] bg-gradient-to-b from-[#e3a79b] via-[#c04a35] to-[#d0705c]" : "border-[#5f7084] bg-gradient-to-b from-[#c4d3e4] via-[#9fb4cb] to-[#b9cde2]"}`}
            >
              <svg width="13" height="11" viewBox="0 0 13 11" fill="#fff" stroke="#4f5660">
                {i === 0 && <rect x="1.500" y="5.500" width="10" height="4" rx="1" />}
                {i === 1 && <path d="M4.500 .5h7v6.500h-7zM1.500 3.500h7V10h-7zM4 6h2v1.500H4z" />}
                {i === 2 && <path d="M1.500 1h3l2 2.500 2-2.500h3L8.300 5.300 11.500 10h-3l-2-2.700-2 2.700h-3l3.200-4.700z" />}
              </svg>
            </div>
          ))}
        </div>
      </header>

      <nav className="flex h-[21px] shrink-0 items-center">
        <Feather size={15} />
        <div className="ml-1 flex flex-1 pt-px tracking-[-0.3px]">
          {menus.map(([m, w]) => (
            <span key={m} className={`shrink-0 ${w}`}>{m}</span>
          ))}
        </div>
        <div className="-mr-[5px] flex gap-px">
          {[0, 1, 2].map((i) => (
            <div key={i} className="flex h-[17px] w-[17px] items-center justify-center border border-[#9fb3cc] bg-gradient-to-b from-[#f2f7fd] to-[#dbe7f6]">
              <svg width="9" height="9" viewBox="0 0 9 9" fill="none" stroke="#6d7f94" strokeWidth="1.300">
                {i === 0 && <path d="M1.500 7.500h6" strokeWidth="2" />}
                {i === 1 && <path d="M2.500 2.500v-2h6v5h-2M.5 3.500h6v5h-6zM.5 4.500h6" />}
                {i === 2 && <path d="M1 1.500l6 6M7 1.500l-6 6" strokeWidth="2" />}
              </svg>
            </div>
          ))}
        </div>
      </nav>

      <div className="flex h-[34px] shrink-0 gap-[4px]">
        <Bar w="w-[370px]" first>
          <div className="-ml-[2px]"><Grip /></div>
          <Slot><GridIcon /></Slot>
          <svg width="12" height="6" viewBox="0 0 12 6" className="-ml-px mr-px shrink-0"><path d="M2 1h7L5.500 5z" fill="#111" /></svg>
          <Slot><Scroll /></Slot>
          <Sep />
          <Slot><Folder /></Slot>
          <Slot><Floppy /></Slot>
          <Slot><Preview /></Slot>
          <Sep />
          <Slot><Scissors /></Slot>
          <Slot><Copy /></Slot>
          <Slot><Copy gray /></Slot>
          <Sep />
          <Slot><Undo /></Slot>
          <Slot><Undo gray /></Slot>
        </Bar>
        <Bar w="w-[576px]">
          <Grip />
          <Slot><Pointer /></Slot>
          <Slot><Pointer v={1} /></Slot>
          <Slot on><MarkGear /></Slot>
          <Slot><GrayGear /></Slot>
          <Slot><L><path d="M10 13v10l12-4.500z" fill="#bdbdbd" stroke="#999" /></L></Slot>
          <Slot><L><rect x="11" y="13" width="10" height="10" rx="1" fill="#b5b5b5" stroke="#999" /></L></Slot>
          <Slot><L><path d="M11 14v8l10-4z" fill="#ddd" stroke="#999" /><path d="M9 12h14v11H9z" stroke="#999" strokeDasharray="2 1" /></L></Slot>
          <Slot><L><circle cx="16" cy="18" r="5" fill="#e6e6e6" stroke="#999" /><path d="M9 11h14v13H9z" stroke="#aaa" strokeDasharray="2 1" /></L></Slot>
          <Slot><L><rect x="2" y="15" width="6" height="8" fill="#ddd" stroke="#999" /><path d="M14 10l-4 13h6z" fill="#ddd" stroke="#aaa" /><ellipse cx="20" cy="16" rx="3" ry="7" fill="#ddd" stroke="#aaa" /><path d="M0 4h23v20H0z" stroke="#aaa" strokeDasharray="2 1" /></L></Slot>
          <Slot><Rotate /></Slot>
          <Slot><Rotate flip /></Slot>
          <Slot on><Screen /></Slot>
          <Sep />
          <Slot><LaserPen /></Slot>
          <Slot><L><path d="M9 10h14v13H9z" fill="#d5d5d5" stroke="#aaa" /><path d="M12 12v10M16 12v10M20 12v10" stroke="#888" strokeDasharray="3 1" /></L></Slot>
          <Slot><Counter /></Slot>
          <Slot><Person /></Slot>
          <Slot><L><path d="M9 23h15M9 19h15M14 15h10M16 11h8M19 7h5" stroke="#8c8c8c" strokeWidth="2" /><path d="M5 17l3 3 3-4" stroke="#999" /></L></Slot>
        </Bar>
        <Bar w="w-[91px]">
          <Grip />
          <div className="ml-[6px]"><Clock /></div>
          <span className="ml-1 whitespace-nowrap font-['Open_Sans','Noto_Sans',sans-serif] text-[17px] font-bold tracking-[-0.3px]">5,3 s</span>
        </Bar>
      </div>

      <div className="flex h-[35px] shrink-0 gap-[4px]">
        <Bar w="w-[350px]" first>
          <div className="-ml-[2px]"><Grip /></div>
          <Slot><DeleteBall /></Slot>
          <Sep />
          <Slot><Tee /></Slot>
          <Slot><Barcode /></Slot>
          <Slot><Import /></Slot>
          <Slot><Nodes /></Slot>
          <Sep />
          <Slot><Svg><ellipse cx="13" cy="13.500" rx="10.500" ry="7" fill="url(#blueBall)" stroke="#4a7fe0" /><Plus x={0} y={2} /></Svg></Slot>
          <Slot><Svg><rect x="4" y="4" width="18" height="18" fill="url(#blueBall)" stroke="#4a7fe0" /><Plus x={0} y={2} /></Svg></Slot>
          <Slot><Svg><path d="M14 2l9 4-2 12-9 4-9-5V8z" fill="url(#blueBall)" stroke="#4a7fe0" /><Plus x={0} y={2} /></Svg></Slot>
          <Slot><Svg><path d="M22 2L3 22" stroke="#2c62d8" strokeWidth="1.500" /><Plus x={0} y={2} /></Svg></Slot>
          <Slot><Svg><circle cx="14" cy="17.500" r="3.300" fill="#1010ee" /><Plus x={2} y={2} /></Svg></Slot>
        </Bar>
        <Bar w="w-[360px]">
          <Grip />
          <Slot><Spheres /></Slot>
          <Slot><Spheres /></Slot>
          <Slot><Spheres multi /></Slot>
          <Sep />
          <Slot><Bool v={0} /></Slot>
          <Slot><Bool v={1} /></Slot>
          <Slot><Bool v={2} /></Slot>
          <Slot><Bool v={3} /></Slot>
          <Sep />
          <Slot><Rings /></Slot>
          <Slot><Diag /></Slot>
          <Sep />
          <Slot><NodeEdit /></Slot>
        </Bar>
        <Bar w="w-[171px]">
          <Grip />
          <Slot><Zoom><path d="M11 5v12M5 11h12" stroke="#4b3576" strokeWidth="2" /></Zoom></Slot>
          <Slot><Zoom><path d="M5 11h12" stroke="#4b3576" strokeWidth="2" /></Zoom></Slot>
          <Slot><Zoom><rect x="6" y="6" width="8" height="7" fill="#6a6ae0" /><ellipse cx="13" cy="14" rx="4" ry="3" fill="#c77a9c" /></Zoom></Slot>
          <Slot><Zoom><path d="M7 5h8v12H7z" fill="#f4f0ff" stroke="#7a5fc0" /></Zoom></Slot>
          <Slot><Zoom><path d="M6 6h10v10H6z" stroke="#333" strokeWidth="1.300" strokeDasharray="2.500 1.500" /></Zoom></Slot>
        </Bar>
      </div>

      <div className="flex min-h-0 flex-1">
        <aside className="flex w-[30px] shrink-0 flex-col gap-[2px] rounded-br border-b border-r border-[#5f86c9] bg-gradient-to-r from-[#dbeafe] via-[#c9defb] to-[#84aae4]">
          {[0, 1, 2, 3].map((i) => (
            <div
              key={i}
              className={`-ml-px flex h-[30px] w-[29px] shrink-0 items-center justify-center ${i === 2 ? "" : "border border-[#00007c] bg-gradient-to-b from-[#fe9355] to-[#ffcb8a]"}`}
            >
              <Svg size={22}>
                {i < 3 && <Ball cx={12} cy={13} r={10} />}
                {i === 0 && <Plus x={0} y={1} />}
                {i === 1 && <><path d="M3 1l9 13" stroke="#f0a030" strokeWidth="4" /><path d="M10 14l4 4-1-6z" fill="#eee" stroke="#555" strokeWidth=".6" /></>}
                {i === 2 && <><path d="M5 1l5 18" stroke="#555" strokeWidth="6" /><path d="M5 1l5 18" stroke="#999" strokeWidth="3" strokeDasharray="1 2" /></>}
                {i === 3 && <><path d="M14 15l7 7" stroke="#9a55e8" strokeWidth="4" /><circle cx="10" cy="9" r="6.500" fill="#dfe2ff" stroke="#8a83c8" strokeWidth="2" /></>}
              </Svg>
            </div>
          ))}
        </aside>

        <section className="ml-[1px] flex w-[237px] shrink-0 flex-col">
          <DockTitle title="Undo/redo commands list" />
          <div className="mt-[2px] h-[486px] shrink-0 border border-[#8592a8] bg-white pl-[1px] pt-[2px]">
            {["<empty>", "Unlock object(s)", "Move object(s)", "Unlock object(s)", "Unlock object(s)", "Lock object(s)"].map((t, i) => (
              <div
                key={i}
                className={`flex h-[15px] w-[233px] items-center whitespace-nowrap rounded-[2px] border leading-[13px] tracking-[-0.25px] ${i === 5 ? "border-[#d9d9d9] bg-gradient-to-b from-[#fafafa] to-[#e6e6e6]" : "border-transparent"} ${i === 0 ? "pl-[2px]" : "pl-px"}`}
              >
                {t}
              </div>
            ))}
          </div>
          <div className="h-[6px] shrink-0" />
          <DockTitle title="Objects marking order" />
          <div className="mb-[1px] mt-[2px] flex min-h-0 flex-1 border border-[#8592a8] bg-white">
            <div className="flex-1 overflow-hidden">
              {objects.map(([k, t], i) => (
                <div key={i} className="flex h-[18px] items-center whitespace-nowrap tracking-[-0.3px]">
                  <div className="flex w-[23px] shrink-0 justify-center pt-px">{k === "i" && <Tri open={false} />}</div>
                  <div className="mr-[5px] flex w-4 shrink-0 items-center justify-center">
                    {k === "r" && <Rings size={15} />}
                    {k === "t" && <Tee size={16} />}
                    {k === "i" && <Import size={16} />}
                  </div>
                  <span className="pt-[3px]">{t}</span>
                </div>
              ))}
            </div>
            <div className="flex w-[17px] shrink-0 flex-col items-center bg-[#f0f0f0] pr-px">
              <svg width="9" height="18" viewBox="0 0 9 18"><path d="M1 11l3.500-4L8 11z" fill="#444" /></svg>
              <div className="flex h-[342px] w-[15px] shrink-0 flex-col items-center justify-center gap-[1px] rounded-[2px] border border-[#979797] bg-gradient-to-r from-[#f4f4f4] via-[#e3e3e6] to-[#c6c6cb]">
                {[0, 1, 2].map((i) => (
                  <div key={i} className="h-[2px] w-[7px] border-b border-white bg-[#5a5a5a]" />
                ))}
              </div>
              <div className="flex-1" />
              <svg width="9" height="17" viewBox="0 0 9 17"><path d="M1 8l3.500 4L8 8z" fill="#444" /></svg>
            </div>
          </div>
        </section>

        <main className="ml-1 flex w-[1200px] shrink-0 flex-col">
          <div className="-mt-[2px] flex h-[22px] shrink-0 items-end pl-[2px]">
            <div className="flex h-[22px] w-[1175px] items-end border-b border-[#9c9c9c]">
              {tabs.map(([t, w]) => (
                <div
                  key={t}
                  className={`flex h-[19px] shrink-0 items-center justify-center border-l-2 border-t border-[#8a8e9c] bg-gradient-to-b from-[#f4f4f4] via-[#e2e2e2] to-[#cccccc] pr-[3px] pt-px tracking-[-0.3px] ${w}`}
                >
                  {t}
                </div>
              ))}
              <div className="-mb-px flex h-[21px] w-[149px] shrink-0 items-center justify-center border border-b-0 border-[#82868f] bg-white tracking-[-0.3px]">EB_G.xlp*</div>
            </div>
            <div className="mb-1 ml-1 flex h-[14px] w-[14px] items-center justify-center rounded-[3px] border border-[#ff4a12] bg-[#ff8534]">
              <svg width="8" height="8" viewBox="0 0 8 8" stroke="#fff" strokeWidth="2"><path d="M1 1l6 6M7 1L1 7" /></svg>
            </div>
          </div>
          <div className="mb-[1px] min-h-0 flex-1 overflow-hidden border border-[#858a96] bg-white">
            <Canvas />
          </div>
        </main>

        <section className="ml-1 flex w-[434px] shrink-0 flex-col">
          <DockTitle title="Properties" cut />
          <div className="mb-[1px] mt-[2px] min-h-0 flex-1 border border-r-0 border-[#858a96] bg-white">
            <div className="mb-px flex h-[21px] items-center border-b border-[#d5d5d5] bg-gradient-to-b from-white to-[#f0f1f3] tracking-[-0.3px] text-[#222]">
              <span className="flex h-full w-[127px] items-center border-r border-[#e0e0e0] pl-[3px] pt-[3px]">Property</span>
              <span className="pl-[3px] pt-[3px]">Value</span>
            </div>
            {rows.map((r, i) => (
              <PropRow key={i} r={r} />
            ))}
          </div>
        </section>
      </div>

      <svg width="900" height="140" viewBox="775 190 900 140" fill="none" stroke="#ed1c24" className="pointer-events-none absolute left-[775px] top-[190px]">
        <path d="M783 312.500L1465 214.500" strokeWidth="4.500" strokeLinecap="round" />
        <rect x="1466.200" y="201.200" width="202.600" height="24.400" strokeWidth="4.600" />
      </svg>
    </div>
  );
}
